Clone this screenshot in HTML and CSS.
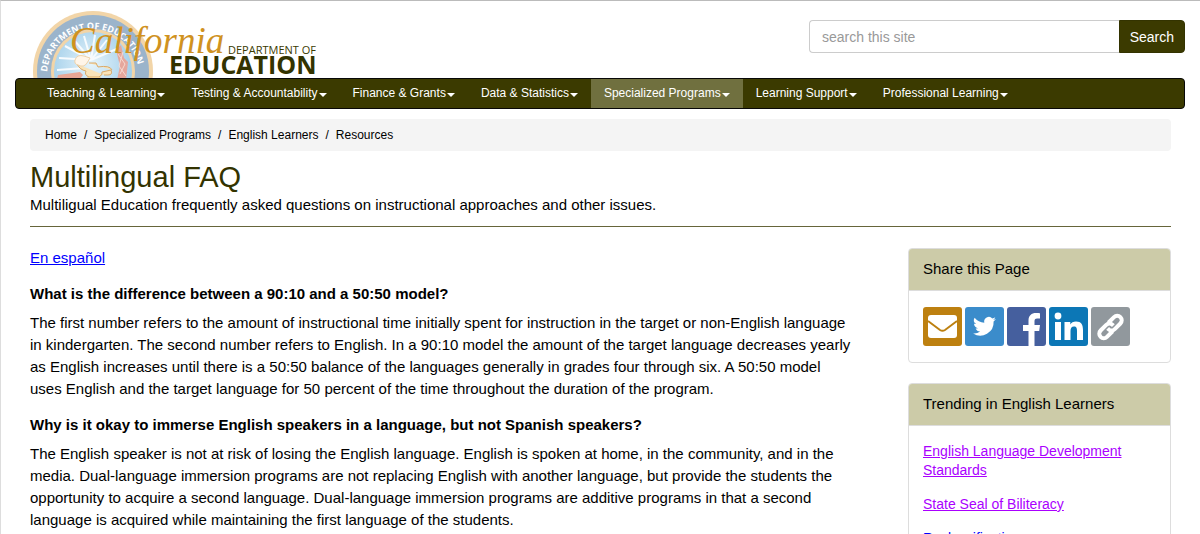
FILE: index.html
```html
<!DOCTYPE html>
<html lang="en">

<head>
    <meta charset="UTF-8">
    <meta name="viewport" content="width=device-width, initial-scale=1.0">
    <title>Multilingual FAQ - Resources (CA Dept of Education)</title>
    <link rel="stylesheet" href="styles.css">
</head>

<body>
    <div class="page">
        <header class="header">
            <a href="#" class="logo" aria-label="California Department of Education">
                <svg width="310" height="70" viewBox="0 0 310 70">
                    <defs>
                        <path id="seal-text" d="M16 65A46 46 0 1 1 108 65"></path>
                        <radialGradient id="seal-sky" cx="60" cy="54" r="42" gradientUnits="userSpaceOnUse">
                            <stop offset="0" stop-color="#e6f4fb"></stop>
                            <stop offset="1" stop-color="#a3cfea"></stop>
                        </radialGradient>
                    </defs>
                    <!-- seal -->
                    <circle cx="62" cy="61" r="60" fill="#f2d5a8"></circle>
                    <circle cx="62" cy="61" r="56" fill="#9bb4cb"></circle>
                    <circle cx="62" cy="61" r="42" fill="#f2d5a8"></circle>
                    <circle cx="62" cy="61" r="39" fill="url(#seal-sky)"></circle>
                    <path d="M60 50L34 36M60 50L43 30M60 50L53 26M60 50L64 25M60 50L76 30M60 50L28 48M60 50L88 38M54 58L26 60" stroke="#f7fbfe" stroke-width="2"></path>
                    <text class="seal-text"><textPath href="#seal-text" startOffset="3">DEPARTMENT OF EDUCATION</textPath></text>
                    <path d="M86 70L89 56L85 40L90 35L93 48L97 52L95 70z" fill="#e5a79c"></path>
                    <path d="M87 44L94 54L89 64M92 42L88 56L95 66" fill="none" stroke="#f6d9d0"></path>
                    <path d="M27 65l22-3 3 3-3 4H26z" fill="#e8a695"></path>
                    <path d="M46 54q3 6 9 7-2 4 3 6H68q4-2 3-5l9-2q2 5-3 5h-4M58 53h7l2 4q12-2 14 3" fill="#f9e3b8" stroke="#d9a968"></path>
                    <path d="M55 70q0-3 3-3H68q3 0 3 3z" fill="#f3cf8d"></path>
                    <path d="M44 50q2-6 9-4l6 2-3 5q-3 5-9 2-4-1-3-5z" fill="#fff5e8" stroke="#efd2a8"></path>
                    <!-- wordmark -->
                    <text x="39" y="43" class="logo-state">California</text>
                    <text x="197" y="44" class="logo-dept">DEPARTMENT OF</text>
                    <text x="138" y="64" class="logo-edu">EDUCATION</text>
                </svg>
            </a>
            <form class="search">
                <input type="text" class="search-input" placeholder="search this site" aria-label="Search this site">
                <button type="submit" class="search-btn">Search</button>
            </form>
        </header>

        <nav class="navbar">
            <a href="#" class="nav-link">Teaching &amp; Learning<span class="caret"></span></a>
            <a href="#" class="nav-link">Testing &amp; Accountability<span class="caret"></span></a>
            <a href="#" class="nav-link">Finance &amp; Grants<span class="caret"></span></a>
            <a href="#" class="nav-link">Data &amp; Statistics<span class="caret"></span></a>
            <a href="#" class="nav-link active">Specialized Programs<span class="caret"></span></a>
            <a href="#" class="nav-link">Learning Support<span class="caret"></span></a>
            <a href="#" class="nav-link">Professional Learning<span class="caret"></span></a>
        </nav>

        <div class="content">
            <nav class="breadcrumb">
                <a href="#">Home</a>
                <span>/</span>
                <a href="#">Specialized Programs</a>
                <span>/</span>
                <a href="#">English Learners</a>
                <span>/</span>
                <a href="#">Resources</a>
            </nav>

            <h1>Multilingual FAQ</h1>
            <p class="summary">Multiligual Education frequently asked questions on instructional approaches and other issues.</p>
            <hr>

            <div class="columns">
                <main class="main">
                    <p><a href="#">En español</a></p>
                    <h2>What is the difference between a 90:10 and a 50:50 model?</h2>
                    <p>The first number refers to the amount of instructional time initially spent for instruction in the target or non-English language in kindergarten. The second number refers to English. In a 90:10 model the amount of the target language decreases yearly as English increases until there is a 50:50 balance of the languages generally in grades four through six. A 50:50 model uses English and the target language for 50 percent of the time throughout the duration of the program.</p>
                    <h2>Why is it okay to immerse English speakers in a language, but not Spanish speakers?</h2>
                    <p>The English speaker is not at risk of losing the English language. English is spoken at home, in the community, and in the media. Dual-language immersion programs are not replacing English with another language, but provide the students the opportunity to acquire a second language. Dual-language immersion programs are additive programs in that a second language is acquired while maintaining the first language of the students.</p>
                </main>

                <aside class="sidebar">
                    <section class="panel">
                        <h2 class="panel-heading">Share this Page</h2>
                        <div class="panel-body share">
                            <a href="#" aria-label="Email">
                                <svg width="39" height="39" viewBox="0 0 39 39">
                                    <rect width="39" height="39" rx="3" fill="#bd8010"></rect>
                                    <rect x="5" y="8" width="29" height="23" rx="3" fill="#fff"></rect>
                                    <path d="M5 14L17 23q2.500 1.500 5 0L34 14" fill="none" stroke="#bd8010" stroke-width="2"></path>
                                </svg>
                            </a>
                            <a href="#" aria-label="Twitter">
                                <svg width="39" height="39" viewBox="0 0 39 39">
                                    <rect width="39" height="39" rx="3" fill="#3b8ccb"></rect>
                                    <path transform="translate(7.500 7.500)" fill="#fff" d="M23.400 4.600a9 9 0 0 1-2.700.8 4.700 4.700 0 0 0 2.100-2.600 9.400 9.400 0 0 1-3 1.100 4.700 4.700 0 0 0-8 4.300A13.300 13.300 0 0 1 2.100 3.300a4.700 4.700 0 0 0 1.500 6.300 4.700 4.700 0 0 1-2.100-.6c0 2.300 1.600 4.200 3.800 4.700a4.700 4.700 0 0 1-2.100.1 4.700 4.700 0 0 0 4.400 3.200A9.400 9.400 0 0 1 .6 19a13.300 13.300 0 0 0 20.500-11.900 9.500 9.500 0 0 0 2.300-2.500z"></path>
                                </svg>
                            </a>
                            <a href="#" aria-label="Facebook">
                                <svg width="39" height="39" viewBox="0 0 39 39">
                                    <rect width="39" height="39" rx="3" fill="#455f9e"></rect>
                                    <path fill="#fff" d="M21.500 39V24H16v-6h5.500v-4.500c0-5 3-7.500 7.500-7.500 2 0 3.500.2 4 .3v5.200h-2.800c-2.200 0-2.700 1.200-2.700 2.700V18h5.500l-.8 6h-4.700v15z"></path>
                                </svg>
                            </a>
                            <a href="#" aria-label="LinkedIn">
                                <svg width="39" height="39" viewBox="0 0 39 39">
                                    <rect width="39" height="39" rx="3" fill="#0c77b6"></rect>
                                    <circle cx="9" cy="9" r="3.400" fill="#fff"></circle>
                                    <path fill="#fff" d="M6 15h6v18H6zM15.500 15h5.800v2.500c1-1.800 3-3 5.700-3 5.400 0 7 3.300 7 8.500v10h-6v-9c0-2.500-.4-4.500-3-4.500s-3.500 2-3.500 4.500v9h-6z"></path>
                                </svg>
                            </a>
                            <a href="#" aria-label="Copy link">
                                <svg width="39" height="39" viewBox="0 0 39 39">
                                    <rect width="39" height="39" rx="3" fill="#91989d"></rect>
                                    <g transform="rotate(-45 19.500 20)" fill="none" stroke="#fff" stroke-width="4">
                                        <path d="M18 24.500H10a4.500 4.500 0 0 1 0-9H18a4.500 4.500 0 0 1 4.500 4.500v1"></path>
                                        <path d="M21 15.500H29a4.500 4.500 0 0 1 0 9H21a4.500 4.500 0 0 1-4.500-4.500v-1"></path>
                                    </g>
                                </svg>
                            </a>
                        </div>
                    </section>

                    <section class="panel">
                        <h2 class="panel-heading">Trending in English Learners</h2>
                        <ul class="panel-body trending">
                            <li><a href="#" class="visited">English Language Development Standards</a></li>
                            <li><a href="#" class="visited">State Seal of Biliteracy</a></li>
                            <li><a href="#">Reclassification</a></li>
                        </ul>
                    </section>
                </aside>
            </div>
        </div>
    </div>
</body>

</html>
```

FILE: styles.css
```css
* {
    box-sizing: border-box;
    margin: 0;
    padding: 0;
}

html {
    height: 100%;
    overflow: hidden;
}

body {
    font-family: "Liberation Sans", Arial, sans-serif;
    font-size: 15px;
    line-height: 22px;
    color: #000;
    background: #fff;
    border-top: 1px solid #bbb;
    border-left: 1px solid #ddd;
}

a {
    color: #00f;
}

.page {
    padding: 0 15px 0 14px;
}

.header {
    display: flex;
    justify-content: space-between;
    align-items: flex-start;
    height: 77px;
    padding: 9px 0 0 16px;
}

.logo {
    display: block;
    height: 68px;
    overflow: hidden;
}

.seal-text {
    font: bold 9px "Open Sans", sans-serif;
    fill: #fff;
}

.logo-state {
    font: italic 37px "Liberation Serif", serif;
    fill: #d0921f;
}

.logo-dept {
    font: 11px "Open Sans", sans-serif;
    fill: #3b3a00;
}

.logo-edu {
    font: bold 25px "Open Sans", sans-serif;
    fill: #333300;
}

.search {
    display: flex;
    width: 376px;
    margin-top: 10px;
}

.search-input {
    flex: 1;
    min-width: 0;
    height: 33px;
    padding: 0 12px;
    font: 14px "Liberation Sans", Arial, sans-serif;
    border: 1px solid #ccc;
    border-right: 0;
    border-radius: 4px 0 0 4px;
}

.search-input::placeholder {
    color: #999;
}

.search-btn {
    height: 33px;
    padding: 0 10px;
    font: 14px "Liberation Sans", Arial, sans-serif;
    color: #fff;
    background: #3b3a00;
    border: 1px solid #333300;
    border-radius: 0 4px 4px 0;
}

.navbar {
    display: flex;
    padding-left: 18px;
    background: #3b3a00;
    border: 1px solid #080808;
    border-radius: 4px;
}

.nav-link {
    display: flex;
    align-items: center;
    padding: 0 13px;
    font-size: 12px;
    line-height: 29px;
    color: #fff;
    text-decoration: none;
}

.nav-link.active {
    background: #70703f;
}

.caret {
    margin: 2px 0 0 1px;
    border-top: 4px solid #fff;
    border-left: 4px solid transparent;
    border-right: 4px solid transparent;
}

.content {
    padding: 10px 14px 0 15px;
}

.breadcrumb {
    display: flex;
    gap: 7px;
    padding: 0 15px;
    font-size: 12px;
    line-height: 32px;
    background: #f4f4f4;
    border-radius: 4px;
}

.breadcrumb a {
    color: #000;
    text-decoration: none;
}

h1 {
    margin: 10px 0 1px;
    font-size: 29px;
    font-weight: normal;
    line-height: 32px;
    color: #333300;
}

hr {
    margin: 10px 0 20px;
    border: 0;
    border-top: 1px solid #66653a;
}

.columns {
    display: flex;
    gap: 53px;
}

.main {
    flex: 1;
}

.main p {
    margin-bottom: 14px;
}

.main h2 {
    margin-bottom: 7px;
    font-size: 15px;
    line-height: 22px;
}

.sidebar {
    width: 263px;
    padding-top: 1px;
}

.panel {
    margin-bottom: 20px;
    border: 1px solid #ddd;
    border-radius: 4px;
}

.panel-heading {
    padding: 9px 14px 10px;
    font-size: 15px;
    font-weight: normal;
    line-height: 22px;
    background: #cccba8;
    border-bottom: 1px solid #ddd;
    border-radius: 3px 3px 0 0;
}

.panel-body {
    padding: 16px 14px;
}

.share {
    display: flex;
    gap: 3px;
}

.share svg {
    display: block;
}

.trending {
    font-size: 14px;
    line-height: 19px;
    list-style: none;
}

.trending li {
    margin-bottom: 15px;
}

.visited {
    color: #a0f;
}
```
